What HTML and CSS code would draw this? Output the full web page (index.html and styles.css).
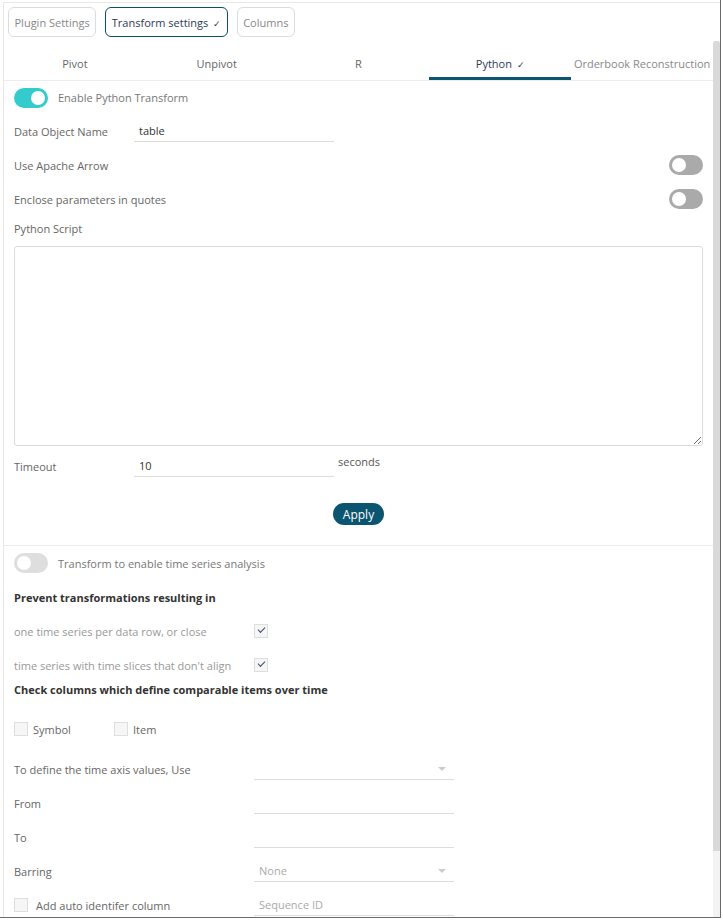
FILE: index.html
```html
<!DOCTYPE html>
<html lang="en">
<head>
  <meta charset="UTF-8">
  <title>Transform settings</title>
  <link rel="stylesheet" href="styles.css">
</head>
<body>
  <div class="frame">
    <div class="window">
      <div class="content">

        <!-- Top buttons -->
        <div class="toolbar">
          <button class="pill">Plugin Settings</button>
          <button class="pill active">Transform settings <span class="tick">&#10003;</span></button>
          <button class="pill">Columns</button>
        </div>

        <!-- Tabs -->
        <div class="tabs">
          <div class="tab">Pivot</div>
          <div class="tab">Unpivot</div>
          <div class="tab">R</div>
          <div class="tab selected">Python <span class="tick">&#10003;</span></div>
          <div class="tab">Orderbook Reconstruction</div>
        </div>

        <div class="section">
          <div class="row row-enable">
            <span class="toggle on"></span>
            <span class="toggle-label">Enable Python Transform</span>
          </div>

          <div class="row">
            <span class="label">Data Object Name</span>
            <div class="field">table</div>
          </div>

          <div class="row spread">
            <span class="label auto">Use Apache Arrow</span>
            <span class="toggle off"></span>
          </div>

          <div class="row spread">
            <span class="label auto">Enclose parameters in quotes</span>
            <span class="toggle off"></span>
          </div>

          <div class="row row-short">
            <span class="label">Python Script</span>
          </div>

          <textarea class="script"></textarea>

          <div class="row row-timeout">
            <span class="label">Timeout</span>
            <div class="field">10</div>
            <span class="unit">seconds</span>
          </div>

          <div class="apply-row">
            <button class="apply">Apply</button>
          </div>
        </div>

        <div class="section divided">
          <div class="row">
            <span class="toggle light"></span>
            <span class="toggle-label">Transform to enable time series analysis</span>
          </div>

          <div class="row">
            <span class="heading">Prevent transformations resulting in</span>
          </div>

          <div class="row">
            <span class="label faint wide">one time series per data row, or close</span>
            <span class="check checked"></span>
          </div>

          <div class="row">
            <span class="label faint wide">time series with time slices that don't align</span>
            <span class="check checked"></span>
          </div>

          <div class="row row-heading">
            <span class="heading">Check columns which define comparable items over time</span>
          </div>

          <div class="row row-checks">
            <label class="opt"><span class="check"></span>Symbol</label>
            <label class="opt"><span class="check"></span>Item</label>
          </div>

          <div class="row row-axis">
            <span class="label wide">To define the time axis values, Use</span>
            <div class="select"><span></span><span class="caret"></span></div>
          </div>

          <div class="row">
            <span class="label wide">From</span>
            <div class="select"></div>
          </div>

          <div class="row">
            <span class="label wide">To</span>
            <div class="select"></div>
          </div>

          <div class="row">
            <span class="label wide">Barring</span>
            <div class="select"><span class="muted">None</span><span class="caret"></span></div>
          </div>

          <div class="row">
            <label class="opt wide"><span class="check"></span>Add auto identifer column</label>
            <div class="select"><span class="muted">Sequence ID</span></div>
          </div>
        </div>

      </div>
      <div class="scrollbar"><div class="thumb"></div></div>
    </div>
  </div>
</body>
</html>
```

FILE: styles.css
```css
/* General Reset */
* {
  margin: 0;
  padding: 0;
  box-sizing: border-box;
}

body {
  font-family: 'Open Sans', 'Noto Sans', sans-serif;
  font-size: 11px;
  color: #666;
  background-color: #fff;
}

/* Frame */
.frame {
  width: 721px;
  height: 918px;
  padding: 2px 0 0 3px;
  border-right: 1px solid #6a6a6a;
  border-bottom: 1px solid #6a6a6a;
  overflow: hidden;
}

.window {
  display: flex;
  height: 100%;
  border-top: 1px solid #e8e8e8;
  border-left: 1px solid #e8e8e8;
}

.content {
  flex: 1;
  min-width: 0;
}

/* Scrollbar */
.scrollbar {
  width: 7px;
  margin-top: 38px;
  background-color: #f3f3f3;
}

.scrollbar .thumb {
  height: 810px;
  background-color: #d9d9d9;
  border-radius: 3px 3px 0 0;
}

/* Toolbar */
.toolbar {
  display: flex;
  gap: 9px;
  padding: 4px 0 3px 4px;
}

.pill {
  height: 30px;
  padding: 0 5.5px;
  font-family: inherit;
  font-size: 11px;
  color: #888;
  background-color: #fff;
  border: 1px solid #dcdcdc;
  border-radius: 6px;
}

.pill.active {
  color: #2c3a57;
  border-color: #0d4f63;
}

.tick {
  font-size: 9px;
  margin-left: 2px;
}

/* Tabs */
.tabs {
  display: flex;
  border-bottom: 1px solid #ececec;
}

.tab {
  width: 142px;
  height: 40px;
  padding-top: 16px;
  text-align: center;
  white-space: nowrap;
  color: #666;
  border-bottom: 3px solid transparent;
}

.tab.selected {
  color: #2c3a57;
  border-bottom-color: #0b5570;
}

.tab:last-child {
  color: #888;
}

/* Sections */
.section {
  padding: 0 10px;
}

.divided {
  border-top: 1px solid #ececec;
}

.row {
  display: flex;
  align-items: center;
  height: 34px;
}

.row-enable {
  height: 33px;
}

.row-short {
  height: 24px;
}

.row-heading {
  height: 14px;
}

.row-checks {
  margin-top: 16px;
}

.row-axis {
  margin-top: 6px;
}

.row-timeout {
  margin-top: 3px;
}

.spread {
  justify-content: space-between;
}

.label {
  flex: none;
  width: 120px;
  white-space: nowrap;
  color: #666;
}

.label.auto {
  width: auto;
}

.label.wide,
.opt.wide {
  width: 240px;
}

.faint {
  color: #999;
}

.heading {
  font-weight: 700;
  color: #333;
  white-space: nowrap;
}

.toggle-label {
  margin-left: 10px;
  color: #777;
}

/* Toggles */
.toggle {
  position: relative;
  flex: none;
  width: 34px;
  height: 20px;
  border-radius: 10px;
  background-color: #aaa;
}

.toggle::after {
  content: '';
  position: absolute;
  top: 3px;
  left: 3px;
  width: 14px;
  height: 14px;
  border-radius: 50%;
  background-color: #fff;
}

.toggle.on {
  background-color: #33cbcc;
}

.toggle.on::after {
  left: 17px;
}

.toggle.light {
  background-color: #dedede;
}

/* Fields */
.field {
  display: flex;
  align-items: center;
  width: 200px;
  height: 22px;
  padding: 0 5px;
  color: #333;
  border-bottom: 1px solid #ddd;
}

.unit {
  align-self: flex-start;
  margin: 5px 0 0 4px;
  color: #555;
}

.script {
  display: block;
  width: 100%;
  height: 200px;
  margin-top: 6px;
  border: 1px solid #dcdcdc;
  border-radius: 3px;
  resize: vertical;
}

.apply-row {
  display: flex;
  justify-content: center;
  height: 62px;
  padding-top: 20px;
}

.apply {
  height: 22px;
  padding: 0 10px;
  font-family: inherit;
  font-size: 12px;
  color: #fff;
  background-color: #0b5570;
  border: none;
  border-radius: 11px;
}

/* Checkboxes */
.check {
  position: relative;
  flex: none;
  width: 14px;
  height: 14px;
  border: 1px solid #dedede;
  background-color: #f6f6f6;
}

.check.checked::after {
  content: '';
  position: absolute;
  left: 3px;
  top: 2px;
  width: 6px;
  height: 3px;
  border-left: 1.5px solid #3a4a6b;
  border-bottom: 1.5px solid #3a4a6b;
  transform: rotate(-45deg);
}

.opt {
  display: flex;
  align-items: center;
  width: 100px;
  color: #666;
}

.opt .check {
  margin-right: 5px;
}

.opt.wide .check {
  margin-right: 8px;
}

/* Selects */
.select {
  display: flex;
  justify-content: space-between;
  align-items: center;
  width: 200px;
  height: 22px;
  padding: 0 8px 0 5px;
  border-bottom: 1px solid #ddd;
}

.muted {
  color: #aaa;
}

.caret {
  width: 0;
  height: 0;
  border-left: 4px solid transparent;
  border-right: 4px solid transparent;
  border-top: 4px solid #ccc;
}
```
